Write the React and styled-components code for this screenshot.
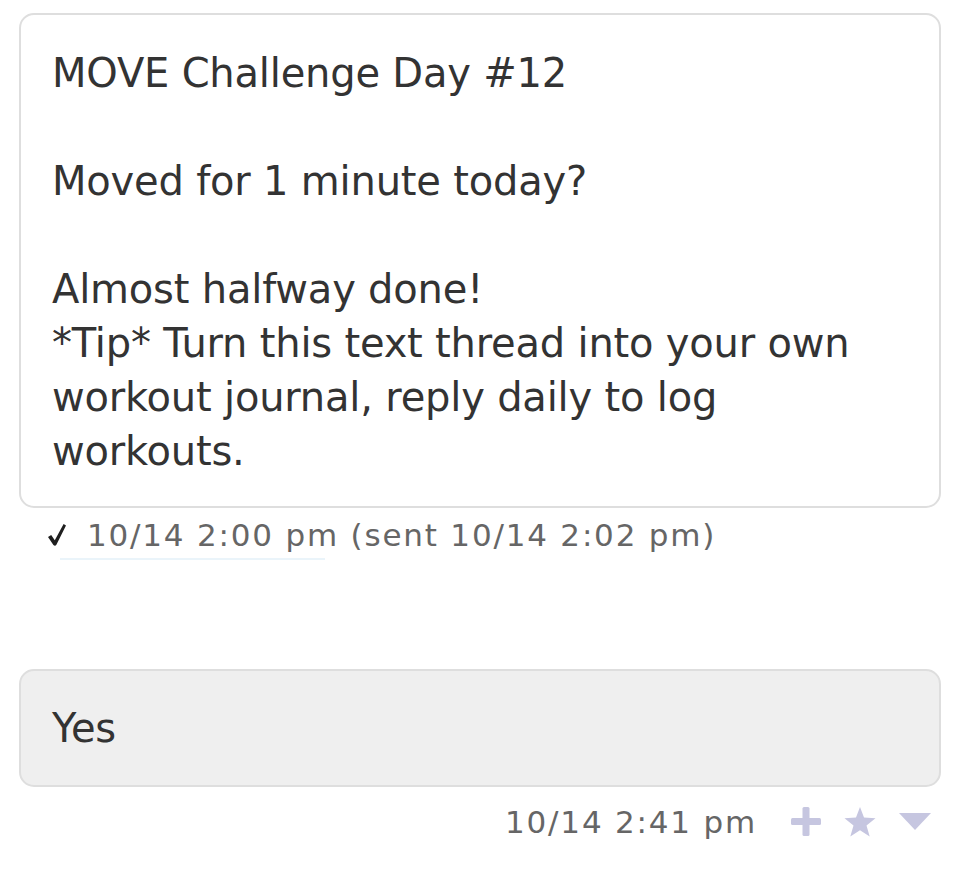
import React from "react";
import styled, { createGlobalStyle } from "styled-components";

const Global = createGlobalStyle`
  html, body {
    margin: 0;
    padding: 0;
    background: #ffffff;
  }
  body {
    font-family: "DejaVu Sans", Verdana, sans-serif;
    color: #333333;
  }
`;

const Thread = styled.div`
  display: flex;
  flex-direction: column;
  padding: 13px 19px 0 19px;
`;

const Bubble = styled.div`
  border: 2px solid #dedede;
  border-radius: 15px;
  background: ${props => (props.$incoming ? "#efefef" : "#ffffff")};
  padding: ${props => (props.$incoming ? "30px 31px 30px 31px" : "31px 31px 28px 31px")};
  font-size: 40px;
  line-height: 54px;
  letter-spacing: -0.2px;
  color: #333333;
  white-space: pre-wrap;
`;

const Meta = styled.div`
  display: flex;
  align-items: center;
  justify-content: ${props => (props.$right ? "flex-end" : "flex-start")};
  gap: ${props => (props.$right ? "34px" : "21px")};
  height: 46px;
  margin-top: ${props => (props.$right ? "12px" : "4px")};
  padding: ${props => (props.$right ? "0 10px 0 0" : "0 0 0 29px")};
  font-size: 31px;
  letter-spacing: 1.8px;
  color: #666666;
`;

const Check = styled.svg`
  display: block;
  margin-top: -1px;
  fill: #1f1f1f;
`;

const Ghost = styled.div`
  height: 111px;
  padding: 0 0 0 41px;
`;

const GhostLine = styled.div`
  width: 265px;
  height: 2px;
  background: #eaf4fa;
`;

const Actions = styled.div`
  display: flex;
  align-items: center;
  gap: 23px;
`;

const Icon = styled.svg`
  display: block;
  fill: #c6c6e0;
`;

const App = () => {
  return (
    <>
      <Global />
      <Thread>
        <Bubble>
          {"MOVE Challenge Day #12\n\nMoved for 1 minute today?\n\nAlmost halfway done!\n*Tip* Turn this text thread into your own workout journal, reply daily to log workouts."}
        </Bubble>
        <Meta>
          <Check width="18" height="22" viewBox="0 0 18 22">
            <path d="M0 13 L3.2 11 L6.8 16.2 L15.6 0 L18 1.4 L8.4 20.8 Q7 22.6 5.4 20.9 Z" />
          </Check>
          <span>10/14 2:00 pm (sent 10/14 2:02 pm)</span>
        </Meta>
        <Ghost>
          <GhostLine />
        </Ghost>
        <Bubble $incoming>Yes</Bubble>
        <Meta $right>
          <span>10/14 2:41 pm</span>
          <Actions>
            <Icon width="30" height="30" viewBox="0 0 30 30">
              <rect x="0" y="11" width="30" height="7" rx="1.5" />
              <rect x="11.5" y="0" width="7" height="29" rx="1.5" />
            </Icon>
            <Icon width="32" height="31" viewBox="0 0 32 31">
              <path d="M16 0 L20 10.6 L31.5 11.2 L22.5 18.4 L25.7 29.6 L16 23.2 L6.3 29.6 L9.5 18.4 L0.5 11.2 L12 10.6 Z" />
            </Icon>
            <Icon width="32" height="18" viewBox="0 0 32 18">
              <path d="M0 0 L32 0 L16 17 Z" />
            </Icon>
          </Actions>
        </Meta>
      </Thread>
    </>
  );
};

export default App;
